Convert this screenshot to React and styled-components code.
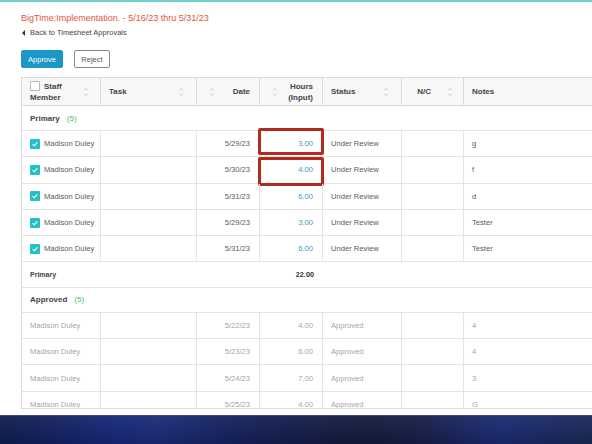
import React from 'react';
import styled, { createGlobalStyle, css } from 'styled-components';

const GlobalStyle = createGlobalStyle`
  html, body {
    margin: 0;
    padding: 0;
    background: #fff;
    overflow: hidden;
  }
  body {
    font-family: "Liberation Sans", Arial, sans-serif;
    width: 592px;
    height: 444px;
  }
`;

const COLS = '79px 96px 63px 63px 79px 62px 1fr';

const Screen = styled.div`
  width: 592px;
  height: 444px;
  display: flex;
  flex-direction: column;
  overflow: hidden;
`;

const TopLine = styled.div`
  height: 2px;
  background: #74d1cf;
  flex-shrink: 0;
`;

const Content = styled.div`
  height: 413px;
  padding-left: 21px;
  display: flex;
  flex-direction: column;
  overflow: hidden;
  flex-shrink: 0;
`;

const Title = styled.div`
  margin-top: 10px;
  font-size: 9px;
  line-height: 12px;
  color: #e0543f;
`;

const BackLink = styled.div`
  margin-top: 4px;
  display: flex;
  align-items: center;
  gap: 5px;
  font-size: 7.5px;
  line-height: 10px;
  color: #444;
  svg {
    margin-left: 1px;
  }
`;

const ButtonRow = styled.div`
  margin-top: 12px;
  display: flex;
  gap: 11px;
`;

const Button = styled.button`
  height: 18px;
  padding: 0;
  font-family: inherit;
  font-size: 7.5px;
  border-radius: 2px;
  cursor: pointer;
  ${(p) => p.$primary && css`
    width: 42px;
    background: #1b98c6;
    border: 1px solid #1b98c6;
    color: #fff;
  `};
  ${(p) => !p.$primary && css`
    width: 36px;
    background: #fff;
    border: 1px solid #8a8a8a;
    color: #555;
  `};
`;

const TableWrap = styled.div`
  margin-top: 9px;
  width: 580px;
  height: 332px;
  box-sizing: border-box;
  border: 1px solid #dcdcdc;
  border-right: none;
  overflow: hidden;
`;

const Row = styled.div`
  display: grid;
  grid-template-columns: ${COLS};
  height: 26.3px;
  box-sizing: border-box;
  border-bottom: 1px solid #e4e4e4;
  color: ${(p) => (p.$muted ? '#a5a5a5' : '#5a5a5a')};
  font-size: 7.6px;
`;

const HeadRow = styled(Row)`
  height: 28px;
  background: #f8f8f8;
  border-bottom: 1px solid #d8d8d8;
  color: #444;
  font-size: 8px;
  font-weight: bold;
`;

const Cell = styled.div`
  position: relative;
  display: flex;
  align-items: center;
  justify-content: ${(p) => (p.$right ? 'flex-end' : 'flex-start')};
  gap: ${(p) => p.$gap || 0}px;
  padding: 0 ${(p) => (p.$pr !== undefined ? p.$pr : 8)}px 0 ${(p) => (p.$pl !== undefined ? p.$pl : 8)}px;
  border-right: 1px solid #e4e4e4;
  white-space: nowrap;
  &:last-child {
    border-right: none;
  }
`;

const HeadCell = styled(Cell)`
  justify-content: ${(p) => p.$justify || 'space-between'};
  border-right-color: #dcdcdc;
`;

const HeadText = styled.span`
  line-height: 11px;
  text-align: ${(p) => (p.$right ? 'right' : 'left')};
`;

const GroupRow = styled.div`
  display: flex;
  align-items: center;
  gap: 7px;
  height: 25px;
  box-sizing: border-box;
  border-bottom: 1px solid #e4e4e4;
  padding-left: 8px;
  font-size: 8px;
  font-weight: bold;
  color: #444;
`;

const Count = styled.span`
  color: #3fbf6a;
  font-weight: normal;
`;

const TotalRow = styled.div`
  display: grid;
  grid-template-columns: 238px 63px 1fr;
  height: 25.3px;
  box-sizing: border-box;
  border-bottom: 1px solid #e4e4e4;
  align-items: center;
  font-size: 7px;
  font-weight: bold;
  color: #444;
`;

const TotalLabel = styled.span`
  padding-left: 8px;
`;

const TotalValue = styled.span`
  text-align: right;
  padding-right: 9px;
  font-size: 7.3px;
  color: #333;
`;

const CheckBox = styled.span`
  display: inline-flex;
  align-items: center;
  justify-content: center;
  width: 10px;
  height: 10px;
  box-sizing: border-box;
  border-radius: 1px;
  flex-shrink: 0;
  ${(p) => p.$checked && css`
    background: #22c1c6;
  `};
  ${(p) => !p.$checked && css`
    background: #fff;
    border: 1px solid #b8b8b8;
    margin-right: 4px;
    vertical-align: -2px;
  `};
`;

const Name = styled.span`
  margin-left: ${(p) => (p.$indent ? 4 : 0)}px;
`;

const Hours = styled.span`
  color: ${(p) => (p.$muted ? '#a5a5a5' : '#3a9cc6')};
`;

const Highlight = styled.div`
  position: absolute;
  left: -2px;
  right: -2px;
  top: ${(p) => p.$top}px;
  bottom: ${(p) => p.$bottom}px;
  border: 3px solid #b3291b;
  border-radius: 2px;
  pointer-events: none;
`;

const Band = styled.div`
  flex: 1;
  border-top: 1px solid #3a4a7a;
  background:
    linear-gradient(180deg, rgba(255,255,255,0.05), rgba(0,0,0,0.1)),
    linear-gradient(90deg, #0f1c4c 0%, #17277a 20%, #1a2b78 27%, #14205a 40%, #131a3c 60%, #161d44 70%, #1a2a72 84%, #1a2756 100%);
`;

const SortIcon = () => (
  <svg width="6" height="10" viewBox="0 0 6 10" fill="none" stroke="#c4c4c4" strokeWidth="0.9">
    <path d="M1 3.5 L3 1.5 L5 3.5" />
    <path d="M1 6.5 L3 8.5 L5 6.5" />
  </svg>
);

const Check = () => (
  <svg width="8" height="8" viewBox="0 0 8 8" fill="none" stroke="#fff" strokeWidth="1.1">
    <path d="M1.6 4.2 L3.3 5.8 L6.4 2.4" />
  </svg>
);

const primaryRows = [
  { date: '5/29/23', hours: '3.00', note: 'g', hl: { top: -3, bottom: 1 } },
  { date: '5/30/23', hours: '4.00', note: 'f', hl: { top: 0, bottom: -3 } },
  { date: '5/31/23', hours: '6.00', note: 'd' },
  { date: '5/29/23', hours: '3.00', note: 'Tester' },
  { date: '5/31/23', hours: '6.00', note: 'Tester' },
];

const approvedRows = [
  { date: '5/22/23', hours: '4.00', note: '4' },
  { date: '5/23/23', hours: '6.00', note: '4' },
  { date: '5/24/23', hours: '7.00', note: '3' },
  { date: '5/25/23', hours: '4.00', note: 'G' },
];

const DataRow = ({ row, muted, checked }) => (
  <Row $muted={muted}>
    <Cell>
      {checked && (
        <CheckBox $checked>
          <Check />
        </CheckBox>
      )}
      <Name $indent={checked}>Madison Duley</Name>
    </Cell>
    <Cell />
    <Cell $right $pr={9}>{row.date}</Cell>
    <Cell $right $pr={9}>
      <Hours $muted={muted}>{row.hours}</Hours>
      {row.hl && <Highlight $top={row.hl.top} $bottom={row.hl.bottom} />}
    </Cell>
    <Cell>{muted ? 'Approved' : 'Under Review'}</Cell>
    <Cell />
    <Cell>{row.note}</Cell>
  </Row>
);

const App = () => {
  return (
    <Screen>
      <GlobalStyle />
      <TopLine />
      <Content>
        <Title>BigTime:Implementation. - 5/16/23 thru 5/31/23</Title>
        <BackLink>
          <svg width="3" height="6" viewBox="0 0 3 6">
            <path d="M3 0 L0 3 L3 6 Z" fill="#333" />
          </svg>
          Back to Timesheet Approvals
        </BackLink>
        <ButtonRow>
          <Button $primary>Approve</Button>
          <Button>Reject</Button>
        </ButtonRow>
        <TableWrap>
          <HeadRow>
            <HeadCell $pr={11}>
              <HeadText>
                <CheckBox />
                Staff
                <br />
                Member
              </HeadText>
              <SortIcon />
            </HeadCell>
            <HeadCell $pr={12}>
              <HeadText>Task</HeadText>
              <SortIcon />
            </HeadCell>
            <HeadCell $pl={12} $pr={9}>
              <SortIcon />
              <HeadText $right>Date</HeadText>
            </HeadCell>
            <HeadCell $pl={12} $pr={9}>
              <SortIcon />
              <HeadText $right>
                Hours
                <br />
                (Input)
              </HeadText>
            </HeadCell>
            <HeadCell $pr={12}>
              <HeadText>Status</HeadText>
              <SortIcon />
            </HeadCell>
            <HeadCell $justify="flex-end" $gap={16} $pr={10}>
              <HeadText>N/C</HeadText>
              <SortIcon />
            </HeadCell>
            <HeadCell>
              <HeadText>Notes</HeadText>
            </HeadCell>
          </HeadRow>

          <GroupRow>
            Primary <Count>(5)</Count>
          </GroupRow>
          {primaryRows.map((r, i) => (
            <DataRow key={i} row={r} checked />
          ))}
          <TotalRow>
            <TotalLabel>Primary</TotalLabel>
            <TotalValue>22.00</TotalValue>
          </TotalRow>

          <GroupRow>
            Approved <Count>(5)</Count>
          </GroupRow>
          {approvedRows.map((r, i) => (
            <DataRow key={i} row={r} muted />
          ))}
        </TableWrap>
      </Content>
      <Band />
    </Screen>
  );
};

export default App;
